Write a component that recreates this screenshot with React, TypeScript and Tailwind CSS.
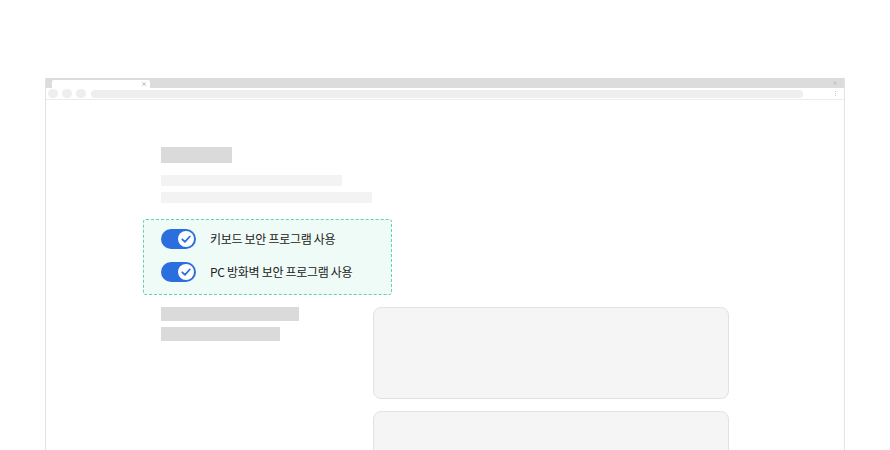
import React from "react";

function Toggle() {
  return (
    <div className="flex h-[20px] w-[35px] items-center justify-end rounded-full bg-[#2b6fde] pr-[2px]">
      <div className="flex h-[16px] w-[16px] items-center justify-center rounded-full bg-white">
        <svg width="12" height="12" viewBox="0 0 12 12" fill="none">
          <path d="M2.3 6.3 L4.9 8.8 L9.8 3.5" stroke="#2b6fde" strokeWidth="1.8" strokeLinecap="round" strokeLinejoin="round" />
        </svg>
      </div>
    </div>
  );
}

const OPTIONS = ["키보드 보안 프로그램 사용", "PC 방화벽 보안 프로그램 사용"];

export default function App() {
  return (
    <div
      className="h-[450px] w-[890px] overflow-hidden bg-white px-[45px] pt-[78px]"
      style={{ fontFamily: '"Noto Sans CJK KR", "Noto Sans", sans-serif' }}
    >
      {/* Browser window */}
      <div className="h-[400px] border-x border-[#e3e3e3]">
        {/* Tab strip */}
        <div className="flex h-[10px] items-end justify-between bg-[#dcdcdc] pl-[6px] pr-[6px]">
          <div className="flex h-[8px] w-[98px] items-center justify-end rounded-t-[2px] bg-white pr-[3px]">
            <span className="text-[6px] leading-none text-[#888]">×</span>
          </div>
          <span className="self-center text-[6px] leading-none text-[#aaa]">×</span>
        </div>
        {/* Toolbar */}
        <div className="flex h-[12px] items-center gap-[4px] border-b border-[#ececec] pl-[2px] pr-[8px]">
          <div className="h-[9px] w-[10px] rounded-full bg-[#eeeeee]" />
          <div className="h-[9px] w-[10px] rounded-full bg-[#eeeeee]" />
          <div className="h-[9px] w-[10px] rounded-full bg-[#eeeeee]" />
          <div className="ml-[1px] h-[8px] w-[712px] rounded-full bg-[#eeeeee]" />
          <div className="ml-auto flex flex-col gap-[1px]">
            <div className="h-[1px] w-[1px] bg-[#ccc]" />
            <div className="h-[1px] w-[1px] bg-[#ccc]" />
            <div className="h-[1px] w-[1px] bg-[#ccc]" />
          </div>
        </div>

        {/* Page content */}
        <div className="pl-[115px] pt-[47px]">
          <div className="h-[16px] w-[71px] bg-[#dadada]" />
          <div className="mt-[12px] h-[11px] w-[181px] bg-[#f3f3f3]" />
          <div className="mt-[6px] h-[11px] w-[211px] bg-[#f3f3f3]" />

          <div className="-ml-[18px] mt-[16px] flex h-[76px] w-[249px] flex-col gap-[13px] rounded-[3px] border border-dashed border-[#5fd6a6] bg-[#effbf6] pl-[17px] pt-[9px]">
            {OPTIONS.map((label) => (
              <div key={label} className="flex h-[20px] items-center gap-[14px]">
                <Toggle />
                <span className="text-[12px] leading-none tracking-[-0.3px] text-[#222]">{label}</span>
              </div>
            ))}
          </div>

          <div className="mt-[12px] flex">
            <div className="w-[212px]">
              <div className="h-[14px] w-[138px] bg-[#dadada]" />
              <div className="mt-[6px] h-[14px] w-[119px] bg-[#dadada]" />
            </div>
            <div className="flex flex-col gap-[12px]">
              <div className="h-[92px] w-[356px] rounded-[8px] border border-[#e2e2e2] bg-[#f5f5f5]" />
              <div className="h-[92px] w-[356px] rounded-[8px] border border-[#e2e2e2] bg-[#f5f5f5]" />
            </div>
          </div>
        </div>
      </div>
    </div>
  );
}
